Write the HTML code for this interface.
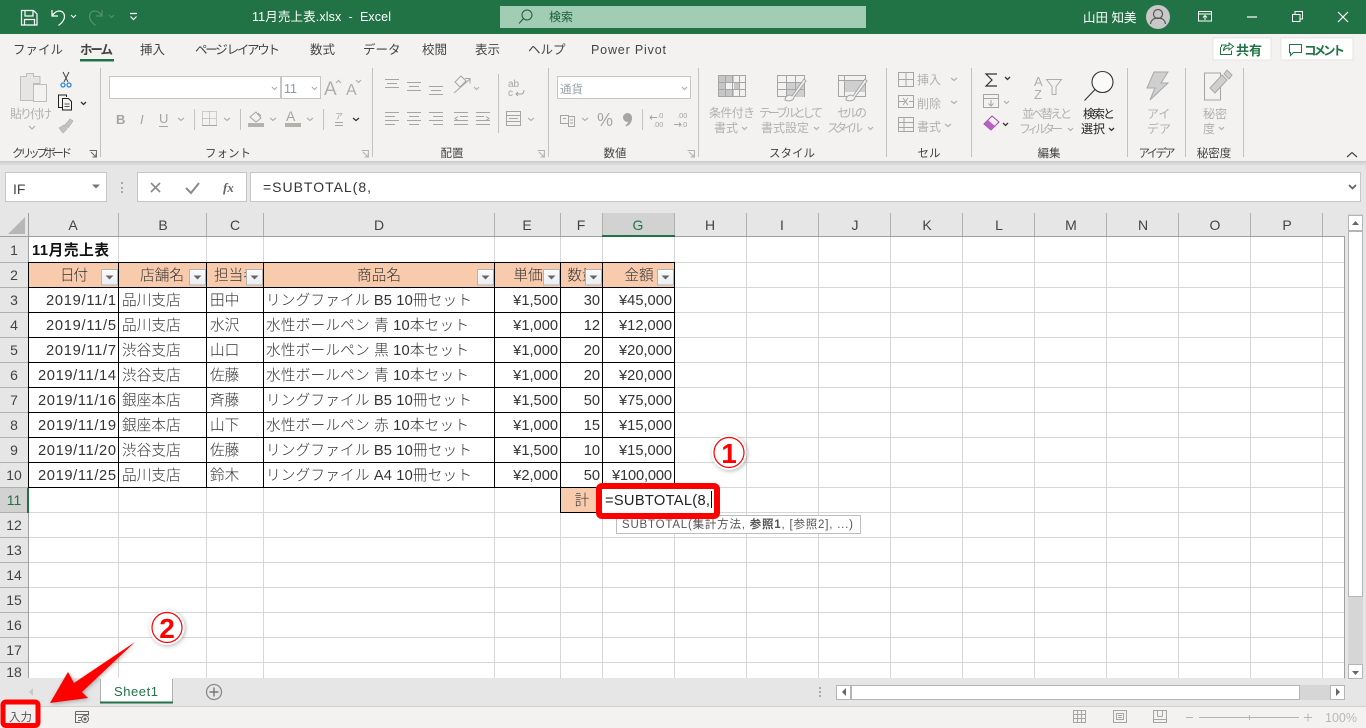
<!DOCTYPE html>
<html lang="ja"><head><meta charset="utf-8"><title>11月売上表.xlsx - Excel</title>
<style>
html,body{margin:0;padding:0;background:#fff;width:1366px;height:728px;overflow:hidden}
svg{display:block;position:absolute;left:0;top:0}
text{font-family:"Liberation Sans","Noto Sans CJK JP",sans-serif;white-space:pre}
.tab{font-size:12.5px;fill:#444}
.g{font-size:12px;fill:#b3b1af}
.lb{font-size:11.5px;fill:#444;text-anchor:middle}
.hd{font-size:14px;fill:#444;text-anchor:middle}
.rn{font-size:14px;fill:#444;text-anchor:middle}
.c{font-size:14.67px;fill:#333;font-weight:300}
.r{font-size:14.67px;fill:#333;text-anchor:end;font-weight:300}
.th{font-size:14.67px;fill:#333;text-anchor:middle;font-weight:300}
.ic{fill:none;stroke:#a5a5a5;stroke-width:1}
.ch{fill:none;stroke:#b3b1af;stroke-width:1.2}
.dk{fill:none;stroke:#333;stroke-width:1.3}
</style></head><body>
<svg width="1366" height="728" viewBox="0 0 1366 728" xmlns="http://www.w3.org/2000/svg">
<defs>
<linearGradient id="sh" x1="0" y1="0" x2="0" y2="1"><stop offset="0" stop-color="#c9c9c9"/><stop offset="1" stop-color="#e6e6e6"/></linearGradient>
<linearGradient id="fb" x1="0" y1="0" x2="0" y2="1"><stop offset="0" stop-color="#fbfbfb"/><stop offset="1" stop-color="#e9edf2"/></linearGradient>
<g id="fbtn"><rect x="0.5" y="0.5" width="16" height="15.5" fill="url(#fb)" stroke="#b4b4b4"/><path d="M4.5 6.5h8l-4 4z" fill="#666"/></g>
<clipPath id="cc"><rect x="207" y="263" width="40" height="24"/></clipPath>
<clipPath id="cf"><rect x="561" y="263" width="25" height="24"/></clipPath>
<filter id="ds" x="-30%" y="-30%" width="160%" height="160%"><feDropShadow dx="1" dy="1" stdDeviation="2" flood-color="#000" flood-opacity=".3"/></filter>
</defs>

<!-- backgrounds -->
<rect width="1366" height="728" fill="#e6e6e6"/>
<rect width="1366" height="34" fill="#217346"/>
<rect y="34" width="1366" height="127" fill="#f3f2f1"/>
<rect y="161" width="1366" height="5" fill="url(#sh)"/>

<!-- title bar -->
<path d="M21.5 10.5h12l3.5 3.5v11h-15.500zM25 10.500v5.500h8v-5.500M24.500 25v-5.500h10v5.500" fill="none" stroke="#fff" stroke-width="1.2"/>
<path d="M52 10v6h6M52 16c2-3 4-5 7-5 3.500 0 5.500 2.500 5.500 5.500 0 3-2 6-6 9" fill="none" stroke="#fff" stroke-width="1.2"/>
<path d="M71 15l2.500 2.500 2.500-2.500" fill="none" stroke="#fff" stroke-width="1"/>
<path d="M102 10v6h-6M102 16c-2-3-4-5-7-5-3.500 0-5.500 2.500-5.500 5.500 0 3 2 6 6 9" fill="none" stroke="#55906f" stroke-width="1.2"/>
<path d="M109 15l2.500 2.500 2.500-2.500" fill="none" stroke="#55906f" stroke-width="1"/>
<path d="M130 13.500h7M130.500 16.500l3 3 3-3" fill="none" stroke="#fff" stroke-width="1.2"/>
<text x="252" y="21" font-size="12.5" fill="#fff" textLength="139">11月売上表.xlsx  -  Excel</text>
<rect x="500" y="6" width="366" height="22" fill="#a0cdb3"/>
<circle cx="527" cy="15" r="5" fill="none" stroke="#1d5c39" stroke-width="1"/><path d="M523.500 18.500l-4.500 5" stroke="#1d5c39" stroke-width="1" fill="none"/>
<text x="549" y="21" font-size="12" fill="#1d5c39">検索</text>
<text x="1083" y="22" font-size="12.5" fill="#fff">山田 知美</text>
<circle cx="1158" cy="17" r="12" fill="#c8c8c8"/>
<circle cx="1158" cy="14" r="4.5" fill="none" stroke="#555" stroke-width="1.2"/><path d="M1150.500 24c.5-4 3.500-6 7.500-6s7 2 7.500 6" fill="none" stroke="#555" stroke-width="1.2"/>
<path d="M1198.500 11.500h13v9.500h-13zM1198.500 14h13M1205 20v-4M1203 17.500l2-2 2 2" fill="none" stroke="#fff" stroke-width="1"/>
<path d="M1247 17h10" stroke="#fff" stroke-width="1.2"/>
<path d="M1292.500 14.500h7.500v7h-7.500zM1295 14v-2.500h7.500v7.500h-2.500" fill="none" stroke="#fff" stroke-width="1"/>
<path d="M1338 12l10 10M1348 12l-10 10" stroke="#fff" stroke-width="1.2"/>

<!-- tabs -->
<text class="tab" x="13" y="54">ファイル</text>
<text class="tab" x="80" y="54" font-weight="bold" textLength="33">ホーム</text>
<rect x="80" y="59" width="34" height="2.5" fill="#217346"/>
<text class="tab" x="140" y="54">挿入</text>
<text class="tab" x="195" y="54" textLength="85">ページ レイアウト</text>
<text class="tab" x="310" y="54">数式</text>
<text class="tab" x="363" y="54">データ</text>
<text class="tab" x="422" y="54">校閲</text>
<text class="tab" x="475" y="54">表示</text>
<text class="tab" x="528" y="54">ヘルプ</text>
<text class="tab" x="591" y="54" textLength="75">Power Pivot</text>
<rect x="1213" y="38" width="58" height="22" fill="#fff" stroke="#e4e4e4"/>
<path d="M1221.500 47v-2h5M1229 43l4.500 3.500-4.500 3.500v-2c-3 0-4.500 1-5.500 3 0-3.500 2-5.500 5.500-5.500zM1220.500 47v7.500h11v-4" fill="none" stroke="#217346" stroke-width="1"/>
<text x="1236" y="55" font-size="13" font-weight="bold" fill="#217346">共有</text>
<rect x="1281" y="38" width="72" height="22" fill="#fff" stroke="#e4e4e4"/>
<path d="M1289.500 44.500h12v8h-8l-3 3v-3h-1z" fill="none" stroke="#217346" stroke-width="1"/>
<text x="1304" y="55" font-size="12.5" font-weight="bold" fill="#217346" textLength="41">コメント</text>

<!-- ribbon separators -->
<g fill="#c2c1c0">
<rect x="100" y="68" width="1" height="89"/><rect x="372" y="68" width="1" height="89"/><rect x="548" y="68" width="1" height="89"/><rect x="698" y="68" width="1" height="89"/><rect x="886" y="68" width="1" height="89"/><rect x="971" y="68" width="1" height="89"/><rect x="1127" y="68" width="1" height="89"/><rect x="1185" y="68" width="1" height="89"/><rect x="1243" y="68" width="1" height="89"/>
<rect x="194" y="109" width="1" height="21"/><rect x="240" y="109" width="1" height="21"/><rect x="323" y="109" width="1" height="21"/><rect x="498" y="74" width="1" height="59"/><rect x="642" y="109" width="1" height="21"/>
</g>

<!-- clipboard -->
<path d="M20.500 76.500h6v-3h7v3h6.500v7h-6.500v17h-13z" fill="#e6e5e4" stroke="#bdbdbd"/>
<rect x="33.500" y="84.500" width="13" height="17" fill="#f3f2f1" stroke="#bdbdbd"/>
<text class="g" x="10" y="118" textLength="42">貼り付け</text>
<path class="ch" d="M29 126l3 3 3-3"/>
<path d="M63 72l5 10M69 72l-5 10" stroke="#444" fill="none" stroke-width="1"/>
<circle cx="63" cy="85" r="2" fill="none" stroke="#2b88d8" stroke-width="1.3"/><circle cx="69" cy="85" r="2" fill="none" stroke="#2b88d8" stroke-width="1.3"/>
<path d="M62 107.500h-3.500v-12.500h8v2M62.500 98.500h6l3 3v8.500h-9z" fill="none" stroke="#222" stroke-width="1"/><path d="M64.500 104h5M64.500 106.500h5" stroke="#222" stroke-width=".8"/>
<path class="dk" d="M81 102l2.500 2.500 2.500-2.500"/>
<path d="M59 128l5-3 3 4-4 4zM65 125l5-6 3 2-5 7z" fill="#c4c2c0" stroke="#b0b0b0" stroke-width=".7"/>
<text class="lb" x="42" y="157" textLength="60">クリップボード</text>
<path d="M89.500 150.500h7v7M91 152l5 5M96 153.500v3.500h-3.500" fill="none" stroke="#666" stroke-width=".9"/>

<!-- font -->
<rect x="109.500" y="76.500" width="171" height="22" fill="#fff" stroke="#c6c6c6"/>
<rect x="281.500" y="76.500" width="39" height="22" fill="#fff" stroke="#c6c6c6"/>
<path class="ch" d="M272 87l2.500 2.500 2.500-2.500M312 87l2.500 2.500 2.500-2.500"/>
<text x="284" y="93" font-size="12.5" fill="#8c9aa8">11</text>
<text x="324" y="95" font-size="19" fill="#aeaeae">A</text><path class="ch" d="M336 83l2.500-2.500 2.500 2.500"/>
<text x="346" y="95" font-size="16" fill="#aeaeae">A</text><path class="ch" d="M356 80l2.500 2.500 2.500-2.500"/>
<text x="116" y="124" font-size="13" font-weight="bold" fill="#a5a5a5">B</text>
<text x="140" y="124" font-size="13" font-style="italic" fill="#a5a5a5">I</text>
<text x="159" y="123" font-size="13" fill="#a5a5a5">U</text><path class="ic" d="M159 126.500h9"/>
<path class="ch" d="M178 118l3 2.500 3-2.500M224 118l3 2.500 3-2.500M270 118l3 2.500 3-2.500M307 118l3 2.500 3-2.500"/>
<path d="M202.500 111.500h14v14h-14zM209.500 111.500v14M202.500 118.500h14" fill="none" stroke="#a5a5a5" stroke-dasharray="1 1"/><path class="ic" d="M202 125.500h15"/>
<path d="M250 117l6-5 5 6-5 4z M258 113l3 3" fill="none" stroke="#a5a5a5"/><rect x="248" y="123" width="16" height="4" fill="#b5b2ae"/>
<text x="286" y="121" font-size="14" fill="#a5a5a5">A</text><rect x="285" y="123" width="16" height="4" fill="#b5b2ae"/>
<text x="335" y="119" font-size="8" fill="#a5a5a5">ア</text><path class="ic" d="M335 122.500h8M335 125.500h8"/>
<path class="dk" d="M353 118l3 2.500 3-2.500"/>
<text class="lb" x="228" y="157">フォント</text>
<path d="M361.500 150.500h7v7M363 152l5 5M368 153.500v3.500h-3.500" fill="none" stroke="#b3b1af" stroke-width=".9"/>

<!-- alignment -->
<path class="ic" d="M385 79.500h14M387 83.500h10M385 87.500h14 M407 82.500h14M409 86.500h10M407 90.500h14 M429 86.500h14M431 90.500h10M429 94.500h14 M385 112.500h14M385 116.500h10M385 120.500h14M385 124.500h10 M407 112.500h14M409 116.500h10M407 120.500h14M409 124.500h10 M429 112.500h14M433 116.500h10M429 120.500h14M433 124.500h10 M454 112.500h14M460 116.500h8M454 120.500h14M454 124.500h14M458 116.500l-3 2 3 2 M476 112.500h14M476 116.500h8M476 120.500h14M476 124.500h14M486 116.500l3 2-3 2"/>
<path class="ic" d="M454 93l16-14M465 78.500l5 0v5M455 82l6-6 5 5-6 6z"/>
<path class="ch" d="M474 87l2.500 2.500 2.500-2.500M528 118l3 2.500 3-2.500"/>
<text x="508" y="87" font-size="10" fill="#a5a5a5">ab</text><text x="508" y="96" font-size="10" fill="#a5a5a5">c</text>
<path class="ic" d="M524 90c0 3-1 4-3 4h-5M518 92l-2 2 2 2"/>
<rect x="506.500" y="111.500" width="14" height="14" fill="none" stroke="#a5a5a5"/><path class="ic" d="M506 115.500h15M506 121.500h15M509 118.500h9"/>
<text class="lb" x="452" y="157">配置</text>
<path d="M537.500 150.500h7v7M539 152l5 5M544 153.500v3.500h-3.500" fill="none" stroke="#b3b1af" stroke-width=".9"/>

<!-- number -->
<rect x="557.500" y="76.500" width="133" height="22" fill="#fff" stroke="#c6c6c6"/>
<text x="560" y="93" font-size="11.5" fill="#9aa1a8">通貨</text>
<path class="ch" d="M682 87l2.500 2.500 2.500-2.500M582 118l3 2.500 3-2.500"/>
<path class="ic" d="M560.500 115.500h8v8h-8zM568.500 116.500h6v10h-6zM563 118.500h3M570 120h3M570 123h3"/>
<text x="597" y="126" font-size="18" fill="#a5a5a5">%</text>
<circle cx="627.500" cy="117.500" r="4.500" fill="#a5a5a5"/><path d="M632 118c0 4-2 7-6 8.500l-.5-1.500c2-1 3-3 3-5z" fill="#a5a5a5"/>
<text x="657" y="118" font-size="7.5" fill="#a5a5a5">.0</text><text x="653" y="127" font-size="7.5" fill="#a5a5a5">.00</text><path class="ic" d="M650 117.500h7M652 115.500l-2 2 2 2"/>
<text x="677" y="118" font-size="7.5" fill="#a5a5a5">.00</text><text x="681" y="127" font-size="7.5" fill="#a5a5a5">.0</text><path class="ic" d="M674 124.500h7M679 122.500l2 2-2 2"/>
<text class="lb" x="615" y="157">数値</text>
<path d="M687.500 150.500h7v7M689 152l5 5M694 153.500v3.500h-3.500" fill="none" stroke="#b3b1af" stroke-width=".9"/>

<!-- styles -->
<rect x="718.500" y="75.500" width="27" height="21" fill="#f3f2f1" stroke="#a5a5a5"/>
<path d="M719 76h15v7h-15zM719 83h7v7h-7zM734 83h5v7h-5zM719 90h15v6h-15z" fill="#c6c6c6"/>
<path class="ic" d="M725.500 75v21M732.500 75v21M739.500 75v21M718 82.500h27M718 89.500h27"/>
<rect x="777.500" y="75.500" width="27" height="21" fill="#f3f2f1" stroke="#a5a5a5"/><path d="M787 83h17v14h-17z" fill="#cfcfcf"/><path class="ic" d="M786.500 75v21M795.500 75v21M777 82.500h27M777 89.500h27"/>
<path d="M785 100c0-4 4-6 7-4l12-17 2 2-12 16c0 3-4 5-9 3z" fill="#f3f2f1" stroke="#a5a5a5"/>
<rect x="838.500" y="75.500" width="27" height="21" fill="#f3f2f1" stroke="#a5a5a5"/><path d="M844 81h21v11h-21z" fill="#cfcfcf"/><path class="ic" d="M838 80.500h27M844.500 75v21"/>
<path d="M846 100c0-4 4-6 7-4l12-17 2 2-12 16c0 3-4 5-9 3z" fill="#f3f2f1" stroke="#a5a5a5"/>
<text class="g" x="709" y="117" textLength="46">条件付き</text>
<text class="g" x="714" y="132" textLength="24">書式</text><path class="ch" d="M742 127l2.500 2.500 2.500-2.500"/>
<text class="g" x="759" y="117" textLength="64">テーブルとして</text>
<text class="g" x="761" y="132" textLength="48">書式設定</text><path class="ch" d="M814 127l2.500 2.500 2.500-2.500"/>
<text class="g" x="837" y="117" textLength="30">セルの</text>
<text class="g" x="827" y="132" textLength="36">スタイル</text><path class="ch" d="M868 127l2.500 2.500 2.500-2.500"/>
<text class="lb" x="792" y="157">スタイル</text>

<!-- cells -->
<path class="ic" d="M898.500 72.500h15v14h-15zM898.500 79.500h15M906 72.500v14"/>
<path class="ic" d="M898.500 95.500h15v12h-15zM898.500 101.500h6M909 101.500h4.500M903 98l5 7M908 98l-5 7"/>
<path class="ic" d="M898.500 117.500h15v14h-15zM898.500 122.500h15M898.500 127.500h15M904 117.500v14"/>
<text class="g" x="917" y="84">挿入</text>
<text class="g" x="917" y="108">削除</text>
<text class="g" x="917" y="131">書式</text>
<path class="ch" d="M951 78l3 2.500 3-2.500M951 101l3 2.500 3-2.500M945 124l3 2.500 3-2.500"/>
<text class="lb" x="929" y="157">セル</text>

<!-- editing -->
<path d="M997 74h-11l6 6-6 6h11" fill="none" stroke="#333" stroke-width="1.2"/>
<path class="dk" d="M1005 77l2.500 2.500 2.500-2.500"/>
<path class="ic" d="M983.500 94.500h15v13h-15zM983.500 98.500h15M991 100v6M988.500 103.500l2.500 2.500 2.500-2.500"/>
<path class="ch" d="M1004 101l2.500 2.500 2.500-2.500"/>
<path d="M984 124l8-8 7 6-8 8z" fill="#f3f2f1" stroke="#a33fb0" stroke-width="1"/><path d="M984 124l4-4 7 6-4 4z" fill="#b661c4"/>
<path class="dk" d="M1003 123l2.500 2.500 2.500-2.500"/>
<text x="1034" y="86" font-size="13" fill="#adadad">A</text><text x="1034" y="99" font-size="13" fill="#adadad">Z</text>
<path d="M1046.500 79.500h15l-5.500 7v8l-4 0v-8z" fill="none" stroke="#adadad"/>
<text class="g" x="1022" y="118" textLength="50">並べ替えと</text>
<text class="g" x="1019" y="133" textLength="44">フィルター</text><path class="ch" d="M1068 128l2.500 2.500 2.500-2.500"/>
<circle cx="1102.500" cy="82" r="10.500" fill="#fafafa" stroke="#333" stroke-width="1.1"/><path d="M1095 89.500l-10.500 11" stroke="#333" stroke-width="1.1" fill="none"/>
<text x="1083" y="118" font-size="12" fill="#222" textLength="32">検索と</text>
<text x="1081" y="133" font-size="12" fill="#222" textLength="24">選択</text><path class="dk" d="M1109 128l2.500 2.500 2.500-2.500"/>
<text class="lb" x="1049" y="157">編集</text>

<!-- ideas & sensitivity -->
<path d="M1154 72h14l-7 11h7l-18 17 5-12h-8z" fill="#cfcfcf" stroke="#a8a8a8"/>
<text class="g" x="1147" y="118">アイ</text><text class="g" x="1147" y="133">デア</text>
<text class="lb" x="1157" y="157" textLength="37">アイデア</text>
<path class="ic" d="M1204.500 73h16v27h-16z" fill="#f3f2f1"/>
<path d="M1210 88l12-13 5 5-12 13z" fill="#cfcfcf" stroke="#a8a8a8"/><path d="M1224 74l3-4 5 5-3 4z" fill="#cfcfcf" stroke="#a8a8a8"/>
<text class="g" x="1203" y="118">秘密</text><text class="g" x="1203" y="133">度</text><path class="ch" d="M1219 127l2.500 2.500 2.500-2.500"/>
<text class="lb" x="1214" y="157">秘密度</text>
<path d="M1347 157l5-4.500 5 4.500" fill="none" stroke="#444" stroke-width="1.2"/>

<!-- formula bar -->
<rect x="5.500" y="172.500" width="101" height="29" fill="#fff" stroke="#c6c6c6"/>
<text x="13" y="194" font-size="14" fill="#444">IF</text>
<path d="M92 184.500h8l-4 4z" fill="#777"/>
<g fill="#a9a9a9"><rect x="121" y="182" width="2" height="2"/><rect x="121" y="187" width="2" height="2"/><rect x="121" y="191" width="2" height="2"/></g>
<rect x="137.500" y="172.500" width="109" height="29" fill="#fff" stroke="#c6c6c6"/>
<rect x="250.500" y="172.500" width="1110" height="29" fill="#fff" stroke="#c6c6c6"/>
<path d="M151 183l9 9M160 183l-9 9" stroke="#8a8a8a" stroke-width="1.6"/>
<path d="M186 188l5 5 8-10" fill="none" stroke="#8a8a8a" stroke-width="2"/>
<text x="223" y="192" font-size="13" font-style="italic" font-weight="bold" fill="#666" style="font-family:'Liberation Serif',serif">fx</text>
<text x="263" y="192" font-size="14" fill="#333" textLength="108">=SUBTOTAL(8,</text>
<path d="M1349 185l3.500 3.500 3.500-3.500" fill="none" stroke="#666" stroke-width="1.8"/>

<!-- sheet -->
<rect x="28" y="237" width="1316" height="441" fill="#fff"/>
<rect x="0" y="213" width="28" height="465" fill="#e6e6e6"/>
<rect x="602" y="213" width="72" height="24" fill="#d2d2d2"/>
<rect x="0" y="488" width="28" height="24" fill="#d2d2d2"/>
<path d="M8 234h17v-17z" fill="#b7b7b7"/>

<!-- grid light -->
<path fill="none" stroke="#d6d6d6" d="M118.500 237v441M206.500 237v441M263.500 237v441M494.500 237v441M560.500 237v441M602.500 237v441M674.500 237v441M746.500 237v441M818.500 237v441M890.500 237v441M962.500 237v441M1034.500 237v441M1106.500 237v441M1178.500 237v441M1250.500 237v441M1322.500 237v441
M28 262.500h1316M28 287.500h1316M28 312.500h1316M28 337.500h1316M28 362.500h1316M28 387.500h1316M28 412.500h1316M28 437.500h1316M28 462.500h1316M28 487.500h1316M28 512.500h1316M28 537.500h1316M28 562.500h1316M28 587.500h1316M28 612.500h1316M28 637.500h1316M28 662.500h1316"/>
<rect x="29" y="238" width="89" height="24" fill="#fff"/>
<!-- header separators -->
<path fill="none" stroke="#b0b0b0" d="M28.500 213v24M118.500 213v24M206.500 213v24M263.500 213v24M494.500 213v24M560.500 213v24M602.500 213v24M674.500 213v24M746.500 213v24M818.500 213v24M890.500 213v24M962.500 213v24M1034.500 213v24M1106.500 213v24M1178.500 213v24M1250.500 213v24M1322.500 213v24"/>
<path fill="none" stroke="#b0b0b0" d="M0 262.500h28M0 287.500h28M0 312.500h28M0 337.500h28M0 362.500h28M0 387.500h28M0 412.500h28M0 437.500h28M0 462.500h28M0 487.500h28M0 512.500h28M0 537.500h28M0 562.500h28M0 587.500h28M0 612.500h28M0 637.500h28M0 662.500h28"/>
<path fill="none" stroke="#9f9f9f" d="M0 236.500h1344.500v442M28.500 213v465"/>
<rect x="602" y="235" width="73" height="2" fill="#217346"/>
<rect x="27" y="488" width="2" height="25" fill="#217346"/>

<text class="hd" x="73" y="230">A</text><text class="hd" x="163" y="230">B</text><text class="hd" x="235" y="230">C</text><text class="hd" x="379" y="230">D</text><text class="hd" x="527" y="230">E</text><text class="hd" x="581" y="230">F</text><text class="hd" x="638" y="230" style="fill:#217346">G</text><text class="hd" x="710" y="230">H</text><text class="hd" x="782" y="230">I</text><text class="hd" x="855" y="230">J</text><text class="hd" x="927" y="230">K</text><text class="hd" x="999" y="230">L</text><text class="hd" x="1071" y="230">M</text><text class="hd" x="1143" y="230">N</text><text class="hd" x="1215" y="230">O</text><text class="hd" x="1287" y="230">P</text>

<text class="rn" x="14" y="255">1</text><text class="rn" x="14" y="280">2</text><text class="rn" x="14" y="305">3</text><text class="rn" x="14" y="330">4</text><text class="rn" x="14" y="355">5</text><text class="rn" x="14" y="380">6</text><text class="rn" x="14" y="405">7</text><text class="rn" x="14" y="430">8</text><text class="rn" x="14" y="455">9</text><text class="rn" x="14" y="480">10</text><text class="rn" x="14" y="505" style="fill:#217346">11</text><text class="rn" x="14" y="530">12</text><text class="rn" x="14" y="555">13</text><text class="rn" x="14" y="580">14</text><text class="rn" x="14" y="605">15</text><text class="rn" x="14" y="630">16</text><text class="rn" x="14" y="655">17</text><text class="rn" x="14" y="677">18</text>

<!-- table -->
<rect x="29" y="263" width="645" height="24" fill="#f8cbad"/>
<rect x="561" y="488" width="41" height="24" fill="#f8cbad"/>
<path fill="none" stroke="#000" d="M28.500 262.500H674.500V487.500H28.500zM28.500 287.500h646M28.500 312.500h646M28.500 337.500h646M28.500 362.500h646M28.500 387.500h646M28.500 412.500h646M28.500 437.500h646M28.500 462.500h646M118.500 262v226M206.500 262v226M263.500 262v226M494.500 262v226M560.500 262v251M602.500 262v251M560.500 512.500h42"/>

<text x="32" y="255" font-size="14.67" font-weight="bold" fill="#111" textLength="77">11月売上表</text>

<text class="th" x="74" y="280" textLength="28">日付</text>
<text class="th" x="162" y="280">店舗名</text>
<text class="th" x="236" y="280" clip-path="url(#cc)">担当者</text>
<text class="th" x="379" y="280">商品名</text>
<text class="th" x="528" y="280">単価</text>
<text class="th" x="582" y="280" clip-path="url(#cf)">数量</text>
<text class="th" x="639" y="280">金額</text>
<use href="#fbtn" x="101" y="269"/><use href="#fbtn" x="189" y="269"/><use href="#fbtn" x="246" y="269"/><use href="#fbtn" x="477" y="269"/><use href="#fbtn" x="543" y="269"/><use href="#fbtn" x="585" y="269"/><use href="#fbtn" x="657" y="269"/>

<text class="r" x="116" y="305" textLength="70">2019/11/1</text><text class="c" x="122" y="305">品川支店</text><text class="c" x="210" y="305">田中</text><text class="c" x="266" y="305" textLength="206">リングファイル B5 10冊セット</text><text class="r" x="558" y="305">¥1,500</text><text class="r" x="600" y="305">30</text><text class="r" x="672" y="305">¥45,000</text>
<text class="r" x="116" y="330" textLength="70">2019/11/5</text><text class="c" x="122" y="330">品川支店</text><text class="c" x="210" y="330">水沢</text><text class="c" x="266" y="330" textLength="203">水性ボールペン 青 10本セット</text><text class="r" x="558" y="330">¥1,000</text><text class="r" x="600" y="330">12</text><text class="r" x="672" y="330">¥12,000</text>
<text class="r" x="116" y="355" textLength="70">2019/11/7</text><text class="c" x="122" y="355">渋谷支店</text><text class="c" x="210" y="355">山口</text><text class="c" x="266" y="355" textLength="203">水性ボールペン 黒 10本セット</text><text class="r" x="558" y="355">¥1,000</text><text class="r" x="600" y="355">20</text><text class="r" x="672" y="355">¥20,000</text>
<text class="r" x="116" y="380" textLength="78">2019/11/14</text><text class="c" x="122" y="380">渋谷支店</text><text class="c" x="210" y="380">佐藤</text><text class="c" x="266" y="380" textLength="203">水性ボールペン 青 10本セット</text><text class="r" x="558" y="380">¥1,000</text><text class="r" x="600" y="380">20</text><text class="r" x="672" y="380">¥20,000</text>
<text class="r" x="116" y="405" textLength="78">2019/11/16</text><text class="c" x="122" y="405">銀座本店</text><text class="c" x="210" y="405">斉藤</text><text class="c" x="266" y="405" textLength="206">リングファイル B5 10冊セット</text><text class="r" x="558" y="405">¥1,500</text><text class="r" x="600" y="405">50</text><text class="r" x="672" y="405">¥75,000</text>
<text class="r" x="116" y="430" textLength="78">2019/11/19</text><text class="c" x="122" y="430">銀座本店</text><text class="c" x="210" y="430">山下</text><text class="c" x="266" y="430" textLength="203">水性ボールペン 赤 10本セット</text><text class="r" x="558" y="430">¥1,000</text><text class="r" x="600" y="430">15</text><text class="r" x="672" y="430">¥15,000</text>
<text class="r" x="116" y="455" textLength="78">2019/11/20</text><text class="c" x="122" y="455">渋谷支店</text><text class="c" x="210" y="455">佐藤</text><text class="c" x="266" y="455" textLength="206">リングファイル B5 10冊セット</text><text class="r" x="558" y="455">¥1,500</text><text class="r" x="600" y="455">10</text><text class="r" x="672" y="455">¥15,000</text>
<text class="r" x="116" y="480" textLength="78">2019/11/25</text><text class="c" x="122" y="480">品川支店</text><text class="c" x="210" y="480">鈴木</text><text class="c" x="266" y="480" textLength="206">リングファイル A4 10冊セット</text><text class="r" x="558" y="480">¥2,000</text><text class="r" x="600" y="480">50</text><text class="r" x="672" y="480" textLength="60">¥100,000</text>
<text class="th" x="582" y="505">計</text>

<!-- tooltip -->
<rect x="616.500" y="515.500" width="244" height="18" fill="#fff" stroke="#bdbdbd"/>
<text x="622" y="528" font-size="11.5" fill="#555" textLength="231">SUBTOTAL(集計方法, <tspan font-weight="bold">参照1</tspan>, [参照2], ...)</text>

<!-- G11 -->
<rect x="599" y="486" width="118" height="30" rx="3" fill="#fff" stroke="#f00" stroke-width="6"/>
<text x="605" y="505" font-size="14.67" fill="#222" textLength="105">=SUBTOTAL(8,</text>
<rect x="711" y="491" width="1" height="17" fill="#000"/>

<!-- scrollbars -->
<rect x="1348" y="214" width="15" height="450" fill="#d6d6d6"/>
<rect x="1348.500" y="215.500" width="14" height="15" fill="#fff" stroke="#b5b5b5"/>
<path d="M1352 225h7l-3.500-4z" fill="#666"/>
<rect x="1348.500" y="231.500" width="14" height="365" fill="#fff" stroke="#b5b5b5"/>
<rect x="1348.500" y="664.500" width="14" height="14" fill="#fff" stroke="#b5b5b5"/>
<path d="M1352 671h7l-3.500 4z" fill="#666"/>

<!-- bottom bar -->
<g fill="#a9a9a9"><rect x="819" y="687" width="2" height="2"/><rect x="819" y="691" width="2" height="2"/><rect x="819" y="695" width="2" height="2"/></g>
<rect x="836" y="685" width="495" height="15" fill="#d6d6d6"/>
<rect x="836.500" y="685.500" width="14" height="14" fill="#fff" stroke="#b5b5b5"/>
<path d="M846 688v8l-4-4z" fill="#666"/>
<rect x="851.500" y="685.500" width="448" height="14" fill="#fff" stroke="#b5b5b5"/>
<rect x="1330.500" y="685.500" width="14" height="14" fill="#fff" stroke="#b5b5b5"/>
<path d="M1336 688v8l4-4z" fill="#666"/>
<path d="M33 688v8l-4-4z" fill="#c8c8c8"/>
<rect x="100" y="678" width="73" height="25" fill="#fff"/>
<path d="M100.500 679v24M172.500 679v24" stroke="#b0b0b0" fill="none"/>
<rect x="100" y="701.500" width="73" height="2" fill="#217346"/>
<text x="114" y="696" font-size="13" fill="#217346" textLength="44">Sheet1</text>
<circle cx="214" cy="692" r="7.5" fill="none" stroke="#8a8a8a" stroke-width="1.3"/><path d="M209.500 692h9M214 687.500v9" stroke="#777" stroke-width="1.4"/>

<!-- status -->
<rect y="706" width="1366" height="22" fill="#f3f2f1"/>
<rect y="706" width="1366" height="1" fill="#d0d0d0"/>
<rect x="3" y="702" width="35" height="23.500" rx="3" fill="#f0efee" stroke="#f00" stroke-width="5"/>
<text x="9" y="721" font-size="11.5" fill="#555">入力</text>
<path fill="none" stroke="#666" d="M75.500 711.500h13v4M75.500 711.500v11h5M75.500 714.500h13M78 717.500h3M78 720.500h3"/><circle cx="85" cy="719" r="3.5" fill="#f3f2f1" stroke="#666"/><circle cx="85" cy="719" r="1.5" fill="#666"/>
<path class="ic" d="M1073.500 710.500h12v12h-12zM1077.500 710.500v12M1081.500 710.500v12M1073.500 714.500h12M1073.500 718.500h12"/>
<path class="ic" d="M1113.500 710.500h13v12h-13zM1116.500 713.500h7v6h-7zM1118 715.500h4M1118 717.500h4"/>
<path class="ic" d="M1153.500 710.500h13v12h-13zM1153.500 719.500h13M1157.500 710.500v6M1162.500 710.500v6M1157.500 716.500h5"/>
<path d="M1186 717.500h7M1199 717.500h100M1249.500 715v5M1304 717.500h8M1308 713.500v8" stroke="#b5b5b5" fill="none"/>
<text x="1325" y="722" font-size="12.5" fill="#b9b9b9">100%</text>

<!-- annotations -->
<g filter="url(#ds)">
<circle cx="729" cy="452.500" r="17.500" fill="#fff"/>
<circle cx="729" cy="452.500" r="15" fill="#fff" stroke="#f00" stroke-width="1.2"/>
<text x="729" y="463" font-size="28" font-weight="bold" fill="#f00" text-anchor="middle">1</text>
</g>
<g filter="url(#ds)">
<circle cx="167" cy="627.500" r="17.500" fill="#fff"/>
<circle cx="167" cy="627.500" r="15" fill="#fff" stroke="#f00" stroke-width="1.2"/>
<text x="167" y="638" font-size="28" font-weight="bold" fill="#f00" text-anchor="middle">2</text>
</g>
<path d="M50 703L68 672L74 683L135 642L82 692L88 698z" fill="#f00" filter="url(#ds)"/>
</svg>
</body></html>
